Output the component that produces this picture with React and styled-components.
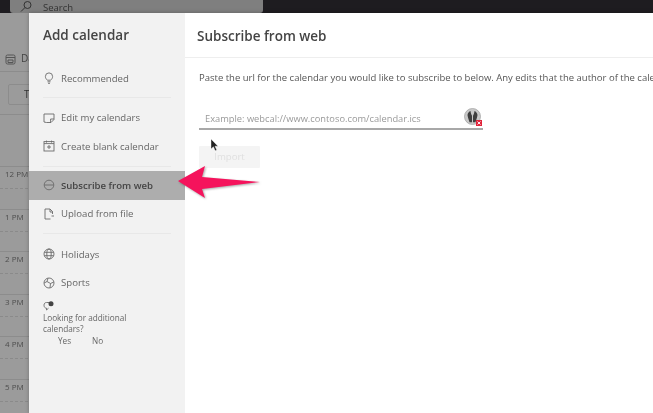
import React from 'react';
import styled, { createGlobalStyle } from 'styled-components';

const GlobalStyle = createGlobalStyle`
  html, body {
    margin: 0;
    padding: 0;
    background: #9b9b9b;
  }
  body {
    font-family: "Open Sans", "Liberation Sans", sans-serif;
  }
`;

const Page = styled.div`
  position: relative;
  width: 653px;
  height: 413px;
  overflow: hidden;
  background: #9b9b9b;
  filter: blur(0.55px);
`;

/* calendar behind the dialog */
const TopBar = styled.div`
  height: 13px;
  background: #1e1c20;
  padding-left: 10px;
`;
const SearchBox = styled.div`
  width: 253px;
  height: 13px;
  background: #7f7f7f;
  border-radius: 0 0 3px 3px;
  display: flex;
  align-items: flex-end;
  gap: 11px;
  padding-left: 10px;
  box-sizing: border-box;
  font-size: 9.5px;
  line-height: 10px;
  color: #333;
  overflow: hidden;
`;
const ViewBar = styled.div`
  height: 59px;
  border-bottom: 1px solid #8c8c8c;
  box-sizing: border-box;
  display: flex;
  align-items: flex-end;
  gap: 5px;
  padding: 0 0 6px 5px;
  font-size: 10px;
  color: #444;
  line-height: 14px;
`;
const ToolRow = styled.div`
  height: 43px;
  border-bottom: 1px solid #8c8c8c;
  padding: 12px 0 0 8px;
  box-sizing: border-box;
`;
const TodayButton = styled.div`
  width: 40px;
  height: 21px;
  border: 1px solid #8c8c8c;
  border-radius: 2px;
  box-sizing: border-box;
  padding-left: 15px;
  font-size: 10px;
  line-height: 19px;
  color: #333;
`;
const TimeRail = styled.div`
  padding-top: 51px;
`;
const HourRow = styled.div`
  position: relative;
  height: 42.6px;
  box-sizing: border-box;
  border-top: 1px solid #8c8c8c;
  padding: 1px 0 0 5px;
  font-size: 8px;
  line-height: 12px;
  color: #4d4d4d;
  &::after {
    content: "";
    position: absolute;
    left: 0;
    right: 0;
    top: 21px;
    border-top: 1px dashed #8a8a8a;
  }
`;

/* dialog */
const Dialog = styled.div`
  position: absolute;
  left: 29px;
  top: 13px;
  width: 640px;
  height: 400px;
  display: flex;
  background: #fff;
  box-shadow: 0 0 4px rgba(0, 0, 0, 0.25);
`;
const Sidebar = styled.nav`
  width: 156px;
  flex: none;
  background: #f2f2f2;
  color: #5c5c5c;
`;
const SideTitle = styled.div`
  padding: 11px 0 0 14px;
  height: 51px;
  box-sizing: border-box;
  font-size: 13.5px;
  line-height: 22px;
  font-weight: 600;
  color: #444;
`;
const NavGroup = styled.div`
  padding: 1px 0;
`;
const NavItem = styled.div`
  display: flex;
  align-items: center;
  gap: 6px;
  height: 28.5px;
  padding-left: 14px;
  font-size: 9.6px;
  font-weight: ${(p) => (p.$active ? 600 : 400)};
  background: ${(p) => (p.$active ? '#adadad' : 'transparent')};
  color: ${(p) => (p.$active ? '#444' : '#666')};
  svg {
    flex: none;
  }
`;
const NavDivider = styled.div`
  height: 1px;
  margin: ${(p) => p.$margin || '5px 14px'};
  background: #e8e8e8;
`;
const Feedback = styled.div`
  padding: 3px 0 0 14px;
  font-size: 8.2px;
  line-height: 11.4px;
  color: #666;
  svg {
    display: block;
  }
`;
const FeedbackActions = styled.div`
  display: flex;
  gap: 21px;
  padding-left: 15px;
`;

const Main = styled.main`
  flex: 1;
  min-width: 0;
  overflow: hidden;
  background: #fff;
`;
const MainHeader = styled.div`
  height: 45px;
  box-sizing: border-box;
  padding: 12px 0 0 12px;
  border-bottom: 1px solid #eee;
  font-size: 13.5px;
  line-height: 22px;
  font-weight: 600;
  color: #444;
`;
const MainBody = styled.div`
  padding: 13px 0 0 14px;
`;
const Hint = styled.p`
  margin: 0;
  font-size: 9.5px;
  line-height: 14px;
  white-space: nowrap;
  color: #555;
`;
const UrlField = styled.div`
  width: 277px;
  height: 19px;
  margin-top: 20px;
  padding: 4px 1px 0 6px;
  border-bottom: 2px solid #a8a8a8;
  box-sizing: content-box;
  display: flex;
  align-items: center;
  justify-content: space-between;
  font-size: 9.3px;
  color: #999;
  svg {
    margin-top: -3px;
  }
`;
const ImportButton = styled.div`
  width: 61px;
  height: 22px;
  margin-top: 16px;
  background: #f4f4f4;
  border-radius: 1px;
  text-align: center;
  font-size: 9.6px;
  line-height: 22px;
  color: #e0e0e0;
`;

/* things drawn on top of the screenshot */
const Callout = styled.svg`
  position: absolute;
  left: 174px;
  top: 162px;
  filter: drop-shadow(1px 1px 1px rgba(0, 0, 0, 0.35));
`;
const Cursor = styled.svg`
  position: absolute;
  left: 210px;
  top: 138px;
`;

const Icon = ({ children }) => (
  <svg width="12" height="12" viewBox="0 0 12 12" fill="none" stroke="#6a6a6a" strokeWidth="0.9">
    {children}
  </svg>
);

const BulbIcon = () => (
  <Icon>
    <path d="M4.3 8.2C3.6 7.3 2.4 6.4 2.4 4.5a3.6 3.6 0 0 1 7.2 0c0 1.9-1.2 2.8-1.9 3.7z" />
    <path d="M4.5 9.8h3M5 11.3h2" />
  </Icon>
);
const NoteIcon = () => (
  <Icon>
    <path d="M1 2h10v5.5L8 10.5H3.5L1 10z" />
    <path d="M11 7H7.6v3.5" />
  </Icon>
);
const AddCalendarIcon = () => (
  <Icon>
    <rect x="1" y="1.6" width="10" height="9.4" />
    <path d="M1 3.6h10M3.5 .6v2M8.5 .6v2M6 5v4M4 7h4" />
  </Icon>
);
const SubscribeIcon = () => (
  <Icon>
    <circle cx="6" cy="6" r="4.8" />
    <path d="M1.5 6h9" />
  </Icon>
);
const FileIcon = () => (
  <Icon>
    <path d="M7.5 11H2V1h5l2.5 2.5V6" />
    <path d="M7 1v3h3M8.5 8H11" />
  </Icon>
);
const GlobeIcon = () => (
  <Icon>
    <circle cx="6" cy="6" r="5" />
    <ellipse cx="6" cy="6" rx="2.2" ry="5" />
    <path d="M1.3 4.3h9.4M1.3 7.7h9.4" />
  </Icon>
);
const BallIcon = () => (
  <Icon>
    <circle cx="6" cy="6" r="5" />
    <path d="M5 1.2 4 4.5l3.5 2 3.3-1.5M4 4.5 1.2 6M7.5 6.5 7 10.8" />
  </Icon>
);
const ChatIcon = () => (
  <Icon>
    <path d="M6 2.5H3.5C2 2.5 1 3.5 1 5.2S2 8.2 3.5 8.2v1.8l2-1.800" />
    <circle cx="8" cy="3.700" r="2.500" fill="#444" stroke="none" />
  </Icon>
);
const BrokenPluginIcon = () => (
  <svg width="18" height="18" viewBox="0 0 18 18">
    <circle cx="8.500" cy="8.500" r="8" fill="#c9c9c9" stroke="#a5a5a5" strokeWidth="0.8" />
    <path d="M3.500 7C3.800 5 5 3.500 6.500 3c.3 2 .8 3.500 1.500 4.800v6.400H5.500C5 12 3.700 9.500 3.500 7z" fill="#3f3f3f" />
    <path d="M13.500 7c-.3-2-1.500-3.500-3-4-.3 2-.8 3.500-1.500 4.800v6.400h2.500c.5-2.200 1.800-4.700 2-7.200z" fill="#3f3f3f" />
    <rect x="12" y="12" width="6" height="6" fill="#e0233a" />
    <path d="M13.500 13.500l3 3m0-3-3 3" stroke="#fff" strokeWidth="0.9" />
  </svg>
);

const hours = ['12 PM', '1 PM', '2 PM', '3 PM', '4 PM', '5 PM'];

const App = () => {
  return (
    <Page>
      <GlobalStyle />
      <TopBar>
        <SearchBox>
          <svg width="12" height="12" viewBox="0 0 12 12" fill="none" stroke="#333" strokeWidth="1">
            <circle cx="7.500" cy="4" r="3.500" />
            <path d="M5 6.500 1 10.500" />
          </svg>
          <span>Search</span>
        </SearchBox>
      </TopBar>
      <ViewBar>
        <svg width="11" height="11" viewBox="0 0 11 11" fill="none" stroke="#555" strokeWidth="1">
          <rect x="1" y="1" width="9" height="9" rx="1.500" />
          <path d="M1 3.500h9M3 6h5v2.500H3z" />
        </svg>
        <span>Day</span>
      </ViewBar>
      <ToolRow>
        <TodayButton>Today</TodayButton>
      </ToolRow>
      <TimeRail>
        {hours.map((h) => (
          <HourRow key={h}>{h}</HourRow>
        ))}
      </TimeRail>

      <Dialog>
        <Sidebar>
          <SideTitle>Add calendar</SideTitle>
          <NavItem><BulbIcon />Recommended</NavItem>
          <NavDivider $margin="4px 14px 5px" />
          <NavGroup>
            <NavItem><NoteIcon />Edit my calendars</NavItem>
            <NavItem><AddCalendarIcon />Create blank calendar</NavItem>
          </NavGroup>
          <NavDivider $margin="4px 14px 4.5px" />
          <NavItem $active><SubscribeIcon />Subscribe from web</NavItem>
          <NavItem><FileIcon />Upload from file</NavItem>
          <NavDivider $margin="5px 14px 5.75px" />
          <NavItem><GlobeIcon />Holidays</NavItem>
          <NavItem><BallIcon />Sports</NavItem>
          <Feedback>
            <ChatIcon />
            <div>Looking for additional<br />calendars?</div>
            <FeedbackActions>
              <span>Yes</span>
              <span>No</span>
            </FeedbackActions>
          </Feedback>
        </Sidebar>
        <Main>
          <MainHeader>Subscribe from web</MainHeader>
          <MainBody>
            <Hint>Paste the url for the calendar you would like to subscribe to below. Any edits that the author of the calendar makes will be reflected automatically.</Hint>
            <UrlField>
              <span>Example: webcal://www.contoso.com/calendar.ics</span>
              <BrokenPluginIcon />
            </UrlField>
            <ImportButton>Import</ImportButton>
          </MainBody>
        </Main>
      </Dialog>

      <Callout width="90" height="40" viewBox="174 162 90 40">
        <polygon points="178,181 205,166 202,177 260,182 202,189 205,198" fill="#f5135c" />
      </Callout>
      <Cursor width="10" height="15" viewBox="0 0 10 15">
        <path d="M1 1v10l2.400-2.200 1.800 4 1.600-.8-1.800-3.800h3z" fill="#222" stroke="#fff" strokeWidth="0.4" />
      </Cursor>
    </Page>
  );
};

export default App;
